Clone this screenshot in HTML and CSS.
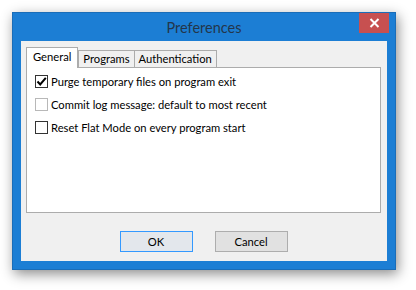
FILE: index.html
```html
<!DOCTYPE html>
<html lang="en">
<head>
    <meta charset="UTF-8">
    <title>Preferences</title>
    <link rel="stylesheet" href="styles.css">
</head>
<body>
    <div class="window">
        <div class="titlebar">
            <span class="title">Preferences</span>
            <span class="close">
                <svg width="11" height="10" viewBox="0 0 11 10"><path d="M1.5 1 L9.5 9 M9.5 1 L1.5 9" stroke="#fff" stroke-width="2"/></svg>
            </span>
        </div>
        <div class="client">
            <div class="tabs">
                <span class="tab on">General</span>
                <span class="tab">Programs</span>
                <span class="tab">Authentication</span>
            </div>
            <div class="panel">
                <label class="row"><span class="box checked"><svg width="11" height="11" viewBox="0 0 11 11"><path d="M1.5 5.5 L4.2 8.5 L9.8 1.8" stroke="#000" stroke-width="2" fill="none"/></svg></span>Purge temporary files on program exit</label>
                <label class="row"><span class="box faded"></span>Commit log message: default to most recent</label>
                <label class="row"><span class="box"></span>Reset Flat Mode on every program start</label>
            </div>
            <div class="buttons">
                <span class="btn default">OK</span>
                <span class="btn">Cancel</span>
            </div>
        </div>
    </div>
</body>
</html>
```

FILE: styles.css
```css
*{
    margin: 0;
    padding: 0;
    box-sizing: border-box;
}

body{
    width: 416px;
    height: 290px;
    background: #fff;
    font-family: Lato, "Noto Sans", sans-serif;
    font-size: 11.2px;
    color: #000;
    overflow: hidden;
}

.window{
    width: 384px;
    height: 258px;
    margin: 12px 0 0 12px;
    padding: 0 8px 8px;
    background: #1c7ed4;
    border: 1px solid #1a6db8;
    box-shadow: 2px 4px 12px rgba(0,0,0,.45);
    display: flex;
    flex-direction: column;
}

.titlebar{
    position: relative;
    height: 28px;
    display: flex;
    align-items: center;
    justify-content: center;
}

.title{
    font-size: 14.5px;
    color: #23364b;
    margin-top: 1px;
}

.close{
    position: absolute;
    right: -2px;
    top: 0;
    width: 30px;
    height: 20px;
    background: #c75050;
    display: flex;
    align-items: center;
    justify-content: center;
}

.client{
    flex: 1;
    background: #f0f0f0;
    padding: 6px 6px 0 5px;
    display: flex;
    flex-direction: column;
}

.tabs{
    display: flex;
    align-items: flex-end;
    height: 20px;
    position: relative;
    z-index: 1;
}

.tab{
    height: 17px;
    padding: 0 4px;
    border: 1px solid #acacac;
    border-bottom: none;
    background: #f0f0f0;
    line-height: 16px;
    margin-left: -1px;
}

.tab.on{
    height: 21px;
    margin: 0 1px -1px 0;
    background: #fff;
    padding: 0 6px;
    line-height: 17px;
}

.panel{
    height: 146px;
    background: #fff;
    border: 1px solid #acacac;
    padding: 2px 0 0 8px;
}

.row{
    display: flex;
    align-items: center;
    height: 23px;
    line-height: 14px;
}

.box{
    width: 13px;
    height: 13px;
    border: 1px solid #333;
    background: #fff;
    margin-right: 3px;
    display: flex;
    align-items: center;
    justify-content: center;
}

.box.faded{
    border-color: #b8b8b8;
}

.buttons{
    display: flex;
    justify-content: center;
    gap: 22px;
    margin-top: 18px;
}

.btn{
    width: 73px;
    height: 21px;
    border: 1px solid #adadad;
    background: #e1e1e1;
    text-align: center;
    line-height: 19px;
}

.btn.default{
    border-color: #3399ff;
    background: #e3e7ec;
}
```
